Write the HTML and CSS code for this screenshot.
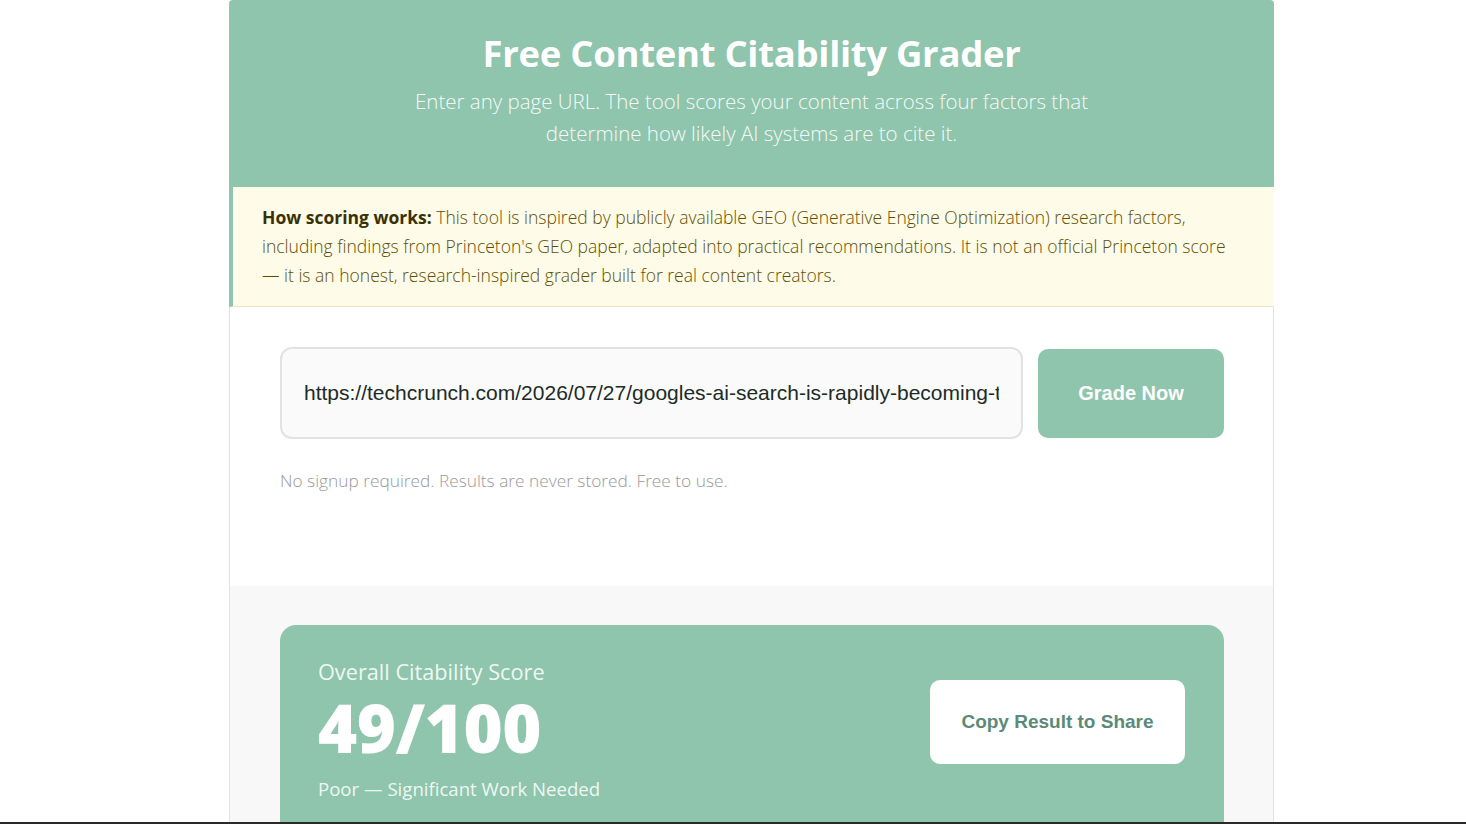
FILE: index.html
```html
<!DOCTYPE html>
<html lang="en">
<head>
<meta charset="utf-8">
<title>Free Content Citability Grader</title>
<link rel="stylesheet" href="styles.css">
</head>
<body>
<div class="page">
  <header class="hero">
    <h1 class="hero-title">Free Content Citability Grader</h1>
    <p class="hero-sub">Enter any page URL. The tool scores your content across four factors that<br>determine how likely AI systems are to cite it.</p>
  </header>
  <div class="notice">
    <strong>How scoring works:</strong> This tool is inspired by publicly available GEO (Generative Engine Optimization) research factors, including findings from Princeton's GEO paper, adapted into practical recommendations. It is not an official Princeton score — it is an honest, research-inspired grader built for real content creators.
  </div>
  <section class="form-area">
    <div class="form-row">
      <input class="url-input" type="text" value="https://techcrunch.com/2026/07/27/googles-ai-search-is-rapidly-becoming-the-default-way-people-find-information/">
      <button class="grade-btn">Grade Now</button>
    </div>
    <p class="form-note">No signup required. Results are never stored. Free to use.</p>
  </section>
  <section class="results">
    <div class="score-card">
      <div class="score-info">
        <div class="score-label">Overall Citability Score</div>
        <div class="score-value">49/100</div>
        <div class="score-status">Poor — Significant Work Needed</div>
      </div>
      <button class="copy-btn">Copy Result to Share</button>
    </div>
  </section>
</div>
<div class="bottom-bar"></div>
</body>
</html>
```

FILE: styles.css
```css
* { box-sizing: border-box; }
html, body { margin: 0; padding: 0; }
body {
  background: #ffffff;
  font-family: "Open Sans", "Noto Sans", sans-serif;
  color: #333;
  overflow: hidden;
}
.page {
  width: 1045px;
  margin-left: 229px;
}
.hero {
  background: #8fc4ad;
  color: #ffffff;
  text-align: center;
  padding: 30px 40px 38px;
  border-radius: 4px 4px 0 0;
}
.hero-title {
  margin: 0;
  font-size: 36.5px;
  line-height: 46px;
  font-weight: 700;
  letter-spacing: -0.3px;
}
.hero-sub {
  margin: 9px 0 0;
  font-size: 20.5px;
  line-height: 32px;
  font-weight: 300;
  color: #f6fbf8;
}
.notice {
  background: #fefbe9;
  border-left: 4px solid #8fc4ad;
  border-bottom: 1px solid #e8e4c4;
  padding: 16px 28px 16px 29px;
  font-size: 17.5px;
  line-height: 29px;
  font-weight: 300;
  color: #5e4f00;
}
.notice strong {
  font-weight: 700;
  color: #3a3100;
}
.form-area {
  background: #ffffff;
  border-left: 1px solid #e2e2e2;
  border-right: 1px solid #e2e2e2;
  padding: 40px 49px 92px 50px;
}
.form-row {
  display: flex;
  align-items: center;
  gap: 15px;
}
.url-input {
  flex: 1;
  min-width: 0;
  height: 92px;
  border: 2px solid #e2e2e2;
  border-radius: 12px;
  background: #fafafa;
  padding: 0 22px;
  font-family: "Liberation Sans", Arial, sans-serif;
  font-size: 21px;
  color: #1c2b27;
  outline: none;
}
.grade-btn {
  width: 186px;
  height: 89px;
  border: none;
  border-radius: 10px;
  background: #8fc4ad;
  color: #ffffff;
  font-family: "Liberation Sans", Arial, sans-serif;
  font-size: 20px;
  font-weight: 700;
}
.form-note {
  margin: 29px 0 0;
  font-size: 17.3px;
  line-height: 26px;
  font-weight: 300;
  color: #999999;
}
.results {
  background: #f8f8f8;
  border-left: 1px solid #e2e2e2;
  border-right: 1px solid #e2e2e2;
  padding: 39px 49px 40px 50px;
}
.score-card {
  background: #8fc4ad;
  border-radius: 16px;
  padding: 32px 39px 40px 38px;
  display: flex;
  align-items: flex-start;
  justify-content: space-between;
}
.score-info {
  color: #eef8f3;
}
.score-label {
  font-size: 21.7px;
  line-height: 30px;
  font-weight: 400;
}
.score-value {
  font-size: 67px;
  line-height: 80px;
  font-weight: 800;
  color: #ffffff;
  letter-spacing: -0.5px;
}
.score-status {
  margin-top: 9px;
  font-size: 18.6px;
  line-height: 26px;
  font-weight: 400;
}
.copy-btn {
  margin-top: 23px;
  width: 255px;
  height: 84px;
  border: none;
  border-radius: 10px;
  background: #ffffff;
  color: #5b8a78;
  font-family: "Liberation Sans", Arial, sans-serif;
  font-size: 19px;
  font-weight: 700;
}
.bottom-bar {
  position: fixed;
  left: 0;
  right: 0;
  bottom: 0;
  height: 2px;
  background: #2a2a2a;
}
```
